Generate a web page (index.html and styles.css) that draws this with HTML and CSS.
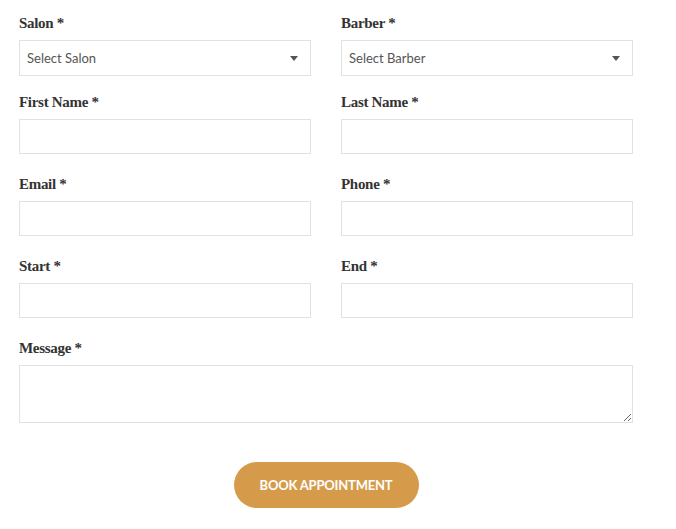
FILE: index.html
```html
<!DOCTYPE html>
<html lang="en">
<head>
<meta charset="utf-8">
<title>Book Appointment</title>
<link rel="stylesheet" href="styles.css">
</head>
<body>
<form class="booking">
  <div class="grid">
    <div class="field sel">
      <label class="lbl">Salon *</label>
      <div class="select-wrap">
        <select class="control select"><option>Select Salon</option></select>
      </div>
    </div>
    <div class="field sel">
      <label class="lbl">Barber *</label>
      <div class="select-wrap">
        <select class="control select"><option>Select Barber</option></select>
      </div>
    </div>
    <div class="field">
      <label class="lbl">First Name *</label>
      <input class="control input" type="text">
    </div>
    <div class="field">
      <label class="lbl">Last Name *</label>
      <input class="control input" type="text">
    </div>
    <div class="field">
      <label class="lbl">Email *</label>
      <input class="control input" type="text">
    </div>
    <div class="field">
      <label class="lbl">Phone *</label>
      <input class="control input" type="text">
    </div>
    <div class="field">
      <label class="lbl">Start *</label>
      <input class="control input" type="text">
    </div>
    <div class="field">
      <label class="lbl">End *</label>
      <input class="control input" type="text">
    </div>
    <div class="field wide">
      <label class="lbl">Message *</label>
      <textarea class="control area"></textarea>
    </div>
  </div>
  <div class="actions">
    <button type="button" class="btn">Book Appointment</button>
  </div>
</form>
</body>
</html>
```
FILE: styles.css
```css
html, body {
  margin: 0;
  padding: 0;
  background: #ffffff;
}

.booking {
  width: 614px;
  padding: 13px 0 0 19px;
}

.grid {
  display: grid;
  grid-template-columns: 292px 292px;
  column-gap: 30px;
}

.field {
  display: flex;
  flex-direction: column;
  padding-bottom: 20px;
}

.field.sel {
  padding-bottom: 16px;
}

.field.wide {
  grid-column: 1 / -1;
  padding-bottom: 0;
}

.lbl {
  font-family: "Liberation Serif", "Times New Roman", serif;
  font-weight: bold;
  font-size: 15px;
  letter-spacing: -0.3px;
  line-height: 20px;
  color: #333333;
  margin-bottom: 7px;
}

.control {
  box-sizing: border-box;
  width: 100%;
  border: 1px solid #e2e2e2;
  background: #ffffff;
  border-radius: 0;
  margin: 0;
  outline: none;
}

.input {
  height: 35px;
}

.select-wrap {
  position: relative;
}

.select-wrap::after {
  content: "";
  position: absolute;
  right: 13px;
  top: 16px;
  width: 0;
  height: 0;
  border-left: 4px solid transparent;
  border-right: 4px solid transparent;
  border-top: 5px solid #555555;
  pointer-events: none;
}

.select {
  -webkit-appearance: none;
  appearance: none;
  height: 36px;
  padding: 0 0 0 7px;
  font-family: Lato, "Liberation Sans", sans-serif;
  font-size: 13px;
  color: #555555;
}

.area {
  height: 58px;
  display: block;
  resize: both;
}

.actions {
  display: flex;
  justify-content: center;
  margin-top: 39px;
}

.btn {
  width: 185px;
  height: 46px;
  border: none;
  border-radius: 23px;
  background: #d69b4a;
  color: #ffffff;
  font-family: Lato, "Liberation Sans", sans-serif;
  font-weight: bold;
  font-size: 13px;
  letter-spacing: -0.2px;
  text-transform: uppercase;
  padding: 0;
}
```
